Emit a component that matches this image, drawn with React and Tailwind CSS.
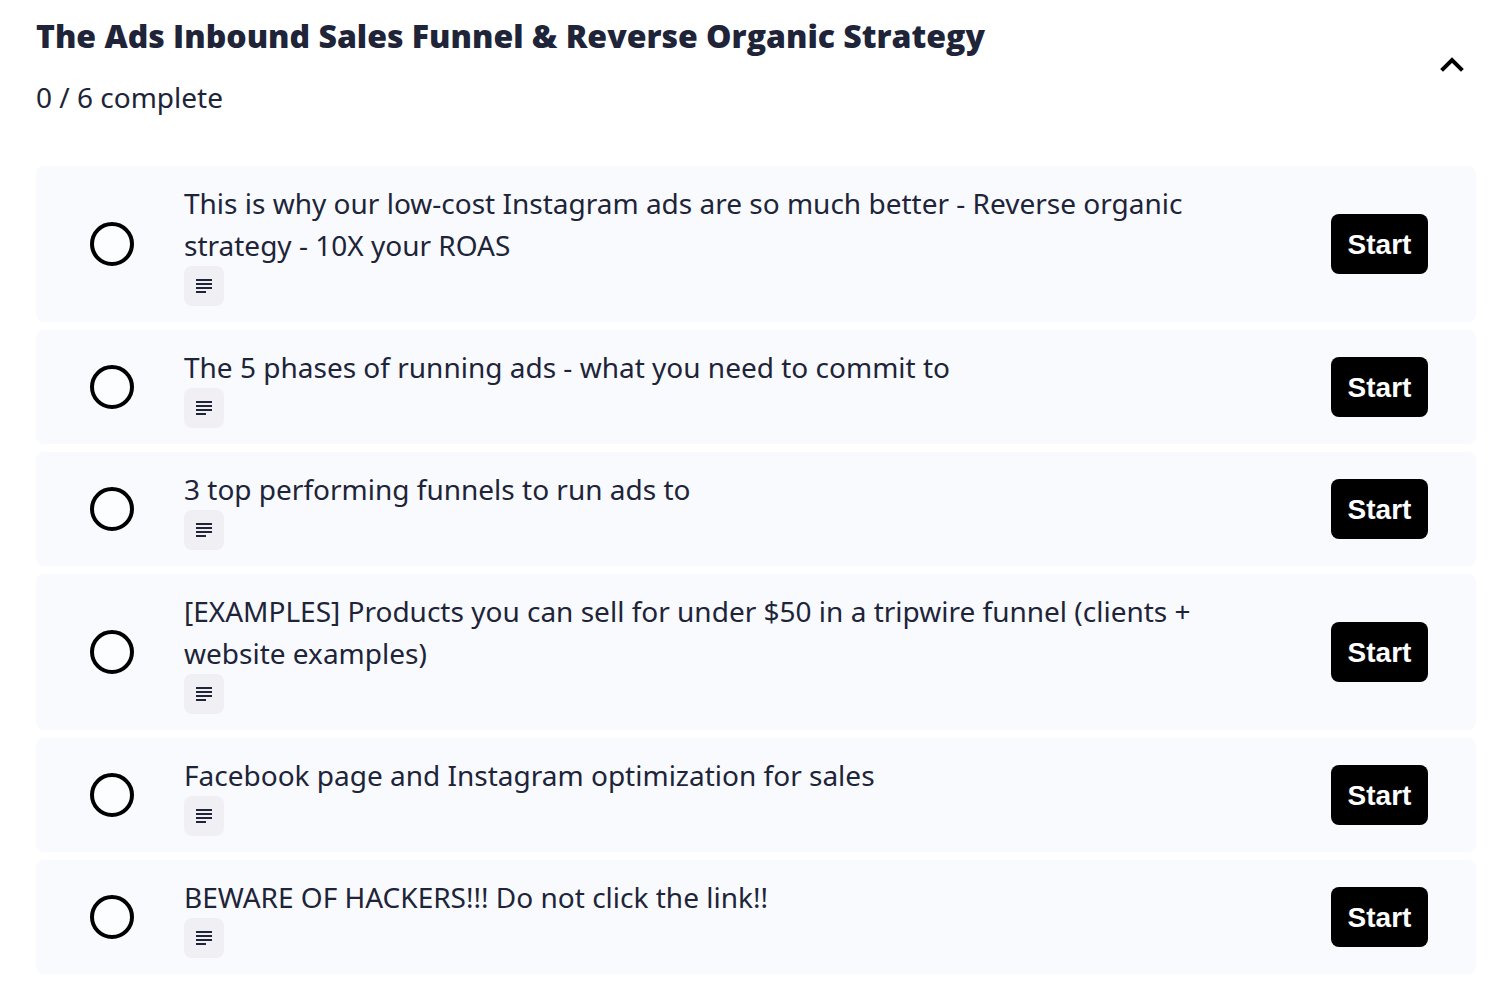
import React, { useState } from 'react';

const lessons = [
  'This is why our low-cost Instagram ads are so much better - Reverse organic strategy - 10X your ROAS',
  'The 5 phases of running ads - what you need to commit to',
  '3 top performing funnels to run ads to',
  '[EXAMPLES] Products you can sell for under $50 in a tripwire funnel (clients + website examples)',
  'Facebook page and Instagram optimization for sales',
  'BEWARE OF HACKERS!!! Do not click the link!!'
];

const ChevronUp = ({ open }) => (
  <svg
    className={`h-6 w-6 ${open ? '' : 'rotate-180'}`}
    viewBox="0 0 24 24"
    fill="none"
    stroke="#000"
    strokeWidth="4"
    aria-hidden="true"
  >
    <path d="M1.6 17.4 12 7l10.4 10.4" />
  </svg>
);

const TextIcon = () => (
  <span className="flex h-10 w-10 items-center justify-center rounded-lg bg-[#f0eff4]">
    <svg className="h-4 w-4" viewBox="0 0 16 16" fill="#202438" aria-hidden="true">
      <path d="M0 1h16v2H0zM0 5h16v2H0zM0 9h16v2H0zM0 13h10v2H0z" />
    </svg>
  </span>
);

const LessonRow = ({ title }) => (
  <li className="flex items-center rounded-lg bg-[#f9fafe] py-4 pr-12 pl-[54px]">
    <span className="h-11 w-11 shrink-0 rounded-full border-4 border-black bg-[#fcfdff]" />
    <div className="ml-[50px] min-w-0 flex-1 pr-[100px]">
      <p className="text-[28px] leading-[42px]">{title}</p>
      <TextIcon />
    </div>
    <button
      type="button"
      aria-label={`Start ${title}`}
      className="h-[60px] w-[97px] shrink-0 cursor-pointer rounded-lg bg-black pt-px font-['Liberation_Sans',sans-serif] text-[28px] font-bold text-white"
    >
      Start
    </button>
  </li>
);

const App = () => {
  const [open, setOpen] = useState(true);

  return (
    <main className="bg-white px-9 pt-3 pr-8 pb-6 font-['Noto_Sans',sans-serif] text-[#202438]">
      <header className="flex items-center justify-between pr-3">
        <div>
          <h1 className="font-['Open_Sans',sans-serif] text-[32px] leading-[48px] font-extrabold">
            The Ads Inbound Sales Funnel &amp; Reverse Organic Strategy
          </h1>
          <p className="mt-4 text-[28px] leading-[42px]">0 / {lessons.length} complete</p>
        </div>
        <button
          type="button"
          aria-label="Toggle section"
          aria-expanded={open}
          onClick={() => setOpen(!open)}
          className="cursor-pointer"
        >
          <ChevronUp open={open} />
        </button>
      </header>

      {open && (
        <ul className="mt-12 flex flex-col gap-2">
          {lessons.map((title) => (
            <LessonRow key={title} title={title} />
          ))}
        </ul>
      )}
    </main>
  );
};

export default App;
